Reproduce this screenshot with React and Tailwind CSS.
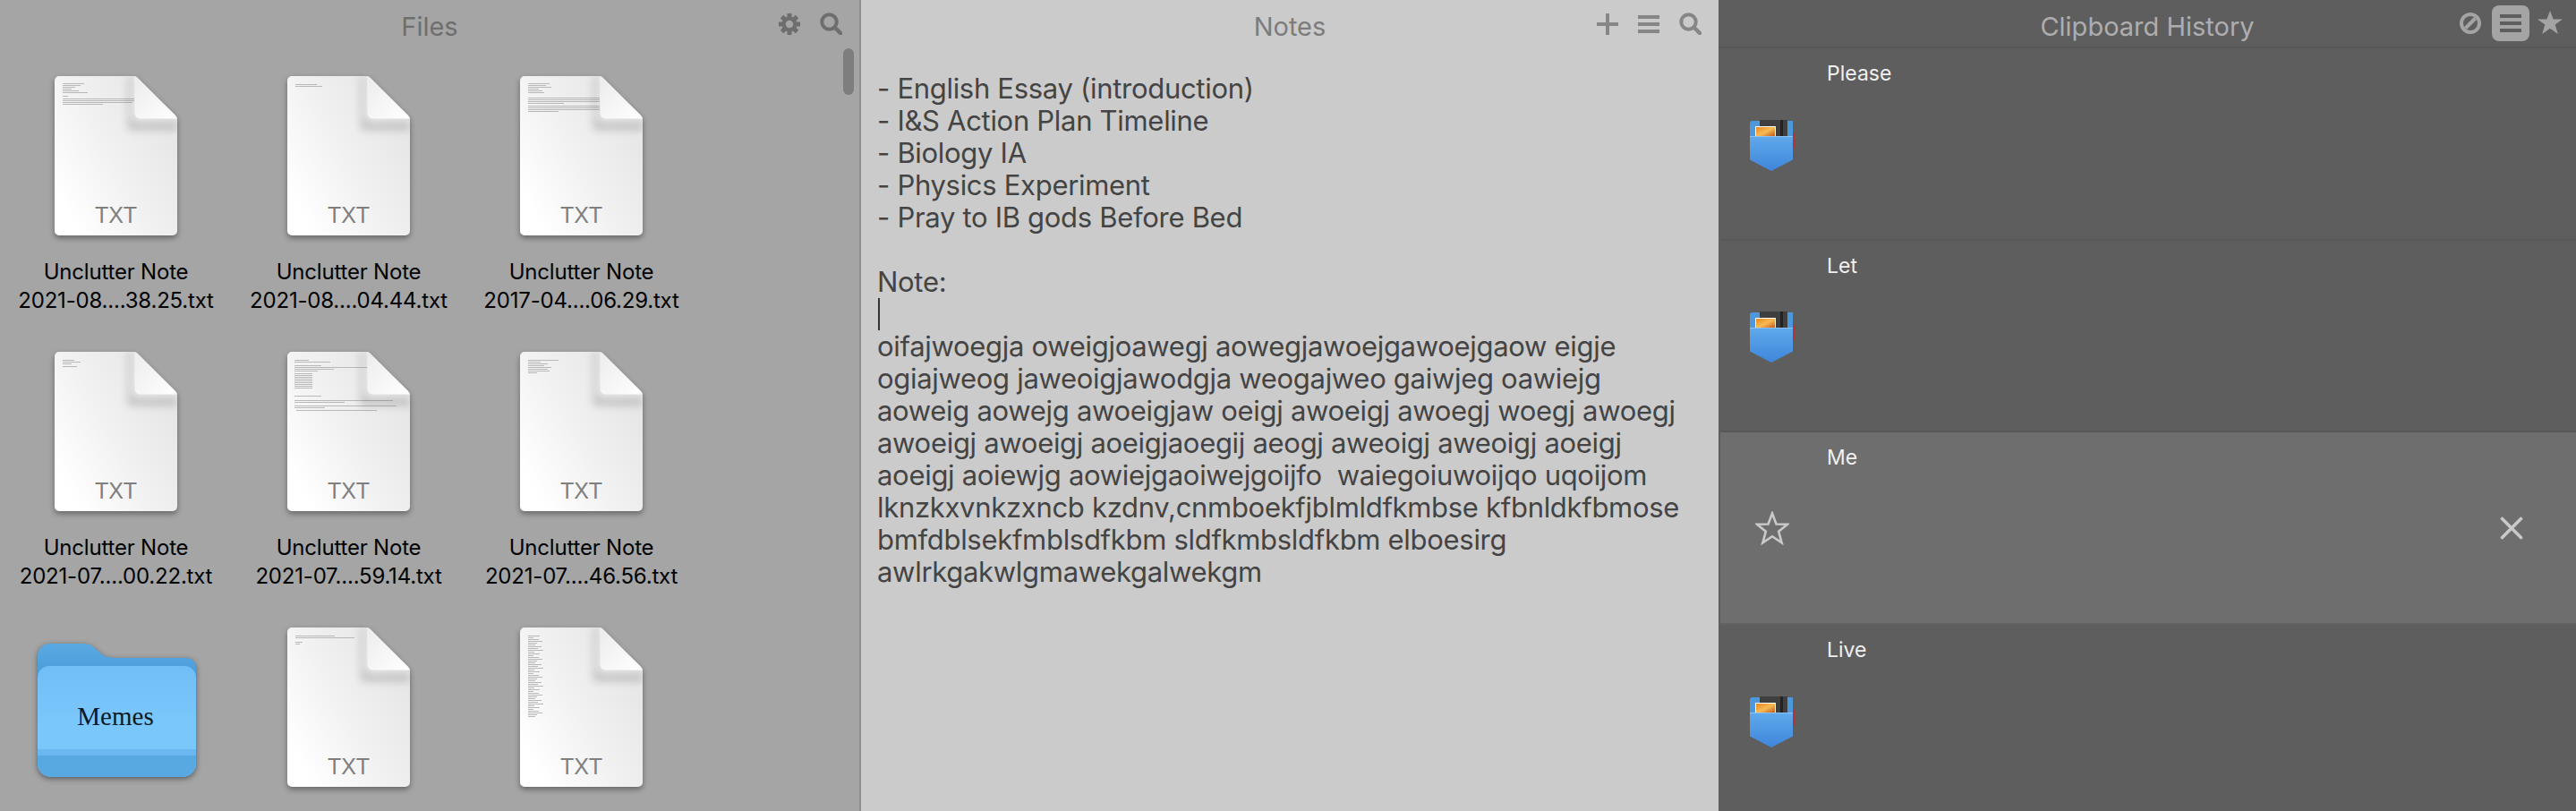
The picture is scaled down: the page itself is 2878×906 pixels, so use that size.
import React, { useId } from "react";

const short = (ys, ws, x = 9) => ys.map((y, i) => [x, y, ws[i % ws.length]]);

const THUMBS = [
  [...short([8, 10, 12, 14, 16, 18], [24, 20, 14, 10, 18, 28]), [9, 22, 6], [9, 25, 80], [9, 27, 80], [9, 29, 78], [9, 31, 45]],
  [[9, 9, 24], [9, 11, 30]],
  [...short([8, 10, 12, 14, 16, 18], [24, 20, 26, 12, 16, 18]), [9, 24, 80], [9, 26, 80], [9, 28, 80], [9, 30, 40], [9, 33, 80], [9, 35, 80], [9, 37, 80], [9, 39, 34]],
  [[9, 9, 13], [9, 11, 20], [9, 13, 10], [9, 16, 16]],
  [[8, 9, 16], [8, 11, 40], [8, 15, 30], [8, 17, 88], [8, 19, 44], [8, 21, 26],
   ...[24, 26, 28, 30, 32, 34, 36, 38, 40].map((y) => [8, y, 20]), [8, 49, 30], [8, 54, 110], [8, 56, 56], [8, 60, 114], [8, 62, 34], [10, 65, 90]],
  [[9, 9, 34], [9, 11, 14], [9, 13, 22], [9, 15, 18], [9, 17, 26], [9, 19, 22], [9, 21, 24], [9, 23, 10]],
  [[9, 9, 44], [9, 11, 66], [9, 16, 8], [9, 18, 5]],
  [...[9,11,13,15,17,19,21,23,25,27,29,31,33,35,37,39,41,43,45,47,49,51,53,55,57,59,61,63,65,67,69,71,73,75,77,79,81,83,85,87,89,91,93,95,97,99].map((y, i) => [9, y, [13, 6, 12, 16, 10, 8, 15, 11, 17, 7][i % 10]])],
];

function DocIcon({ lines }) {
  const id = useId();
  return (
    <svg width="137" height="178" viewBox="0 0 137 178" className="block overflow-visible drop-shadow-[0_3px_3px_rgba(0,0,0,0.38)]">
      <defs>
        <linearGradient id={id + "b"} x1="1" y1="0.18" x2="0.08" y2="0.82">
          <stop offset="0" stopColor="#e4e4e4" />
          <stop offset="0.55" stopColor="#f1f1f1" />
          <stop offset="1" stopColor="#ffffff" />
        </linearGradient>
        <linearGradient id={id + "f"} x1="0" y1="0" x2="1" y2="1">
          <stop offset="0" stopColor="#ececec" />
          <stop offset="1" stopColor="#ffffff" />
        </linearGradient>
        <filter id={id + "s"} x="-40%" y="-40%" width="180%" height="180%">
          <feGaussianBlur stdDeviation="5" />
        </filter>
        <clipPath id={id + "c"}>
          <path d="M5 0H89L137 47V173a5 5 0 0 1-5 5H5a5 5 0 0 1-5-5V5a5 5 0 0 1 5-5Z" />
        </clipPath>
      </defs>
      <path d="M5 0H88Q90 0 92 2L135 44Q137 46 137 50V173a5 5 0 0 1-5 5H5a5 5 0 0 1-5-5V5a5 5 0 0 1 5-5Z" fill={`url(#${id}b)`} />
      {lines.map(([x, y, w], i) => (
        <rect key={i} x={x} y={y} width={w} height="1" fill="#b8b8b8" />
      ))}
      <g clipPath={`url(#${id}c)`}>
        <path d="M86 0V44Q86 52 94 52H137V60H82V0Z" fill="#000" opacity="0.18" filter={`url(#${id}s)`} />
      </g>
      <path d="M89 0Q91 0 93 2L135 44Q136.500 45.500 137 47.500H96Q90 47.500 89.500 41Z" fill={`url(#${id}f)`} />
    </svg>
  );
}

function FolderIcon() {
  const id = useId();
  return (
    <svg width="177" height="150" viewBox="0 0 177 150" className="block drop-shadow-[0_2px_3px_rgba(0,0,0,0.45)]">
      <defs>
        <linearGradient id={id + "t"} x1="0" y1="0" x2="0" y2="1">
          <stop offset="0" stopColor="#5aa9e2" />
          <stop offset="1" stopColor="#3f93d4" />
        </linearGradient>
        <linearGradient id={id + "f"} x1="0" y1="0" x2="0" y2="1">
          <stop offset="0" stopColor="#71bdf5" />
          <stop offset="0.5" stopColor="#7ac7fc" />
          <stop offset="1" stopColor="#7ac7fc" />
        </linearGradient>
      </defs>
      <path d="M0 14a14 14 0 0 1 14-14H50q10 0 15 6l8 7q6 3 12 3H165q12 0 12 12V60H0Z" fill={`url(#${id}t)`} />
      <path d="M0 38a13 13 0 0 1 13-13H164a13 13 0 0 1 13 13V134a15 15 0 0 1-15 15H15a15 15 0 0 1-15-15Z" fill={`url(#${id}f)`} />
      <path d="M0 134V125H177V134a15 15 0 0 1-15 15H15a15 15 0 0 1-15-15Z" fill="#58a8e2" />
      <rect x="0" y="118" width="177" height="7" fill="#6ab8ef" />
    </svg>
  );
}

function Search({ color }) {
  return (
    <svg width="25" height="25" viewBox="0 0 25 25" fill="none" stroke={color} className="block">
      <circle cx="10.500" cy="10.500" r="8.200" strokeWidth="4" />
      <path d="M16.500 16.500L23 23" strokeWidth="4.500" strokeLinecap="round" />
    </svg>
  );
}

function Gear({ color }) {
  return (
    <svg width="24" height="24" viewBox="0 0 24 24" className="block" fill={color}>
      {[0, 45, 90, 135].map((a) => (
        <rect key={a} x="9.500" y="0" width="5" height="24" rx="0.500" transform={`rotate(${a} 12 12)`} />
      ))}
      <circle cx="12" cy="12" r="8.500" />
      <circle cx="12" cy="12" r="4.200" fill="#a5a5a5" />
    </svg>
  );
}

function Plus({ color }) {
  return (
    <svg width="24" height="24" viewBox="0 0 24 24" className="block" fill={color}>
      <rect x="10" y="0" width="4" height="24" />
      <rect x="0" y="10" width="24" height="4" />
    </svg>
  );
}

function Burger({ color }) {
  return (
    <svg width="24" height="20" viewBox="0 0 24 20" className="block" fill={color}>
      <rect y="0" width="24" height="4" />
      <rect y="8" width="24" height="4" />
      <rect y="16" width="24" height="4" />
    </svg>
  );
}

function NoSign({ color }) {
  return (
    <svg width="24" height="24" viewBox="0 0 24 24" fill="none" stroke={color} strokeWidth="4" className="block">
      <circle cx="12" cy="12" r="10" />
      <path d="M6.500 17.500L17.500 6.500" />
    </svg>
  );
}

function StarSolid({ color }) {
  return (
    <svg width="28" height="26" viewBox="0 0 28 26" className="block" fill={color}>
      <path d="M14 0L17.600 9.400H28L19.700 15.600L22.800 26L14 19.700L5.200 26L8.300 15.600L0 9.400H10.400Z" />
    </svg>
  );
}

function StarOutline() {
  return (
    <svg width="38" height="38" viewBox="0 0 38 38" fill="none" stroke="#c9c9c9" strokeWidth="2.600" className="block">
      <path d="M19 2.500L23.500 14.500L36 14.800L26.200 22.800L29.600 35.300L19 28.200L8.400 35.300L11.800 22.800L2 14.800L14.500 14.500Z" />
    </svg>
  );
}

function XIcon() {
  return (
    <svg width="26" height="26" viewBox="0 0 26 26" fill="none" stroke="#c9c9c9" strokeWidth="3.600" strokeLinecap="round" className="block">
      <path d="M2.500 2.500L23.500 23.500M23.500 2.500L2.500 23.500" />
    </svg>
  );
}

function Pocket() {
  const id = useId();
  return (
    <svg width="52" height="57" viewBox="0 0 52 57" className="block">
      <defs>
        <linearGradient id={id + "p"} x1="0" y1="0" x2="0" y2="1">
          <stop offset="0" stopColor="#5fa9ec" />
          <stop offset="1" stopColor="#3f86da" />
        </linearGradient>
        <linearGradient id={id + "o"} x1="0" y1="0" x2="1" y2="1">
          <stop offset="0" stopColor="#e8861f" />
          <stop offset="0.5" stopColor="#f6bb55" />
          <stop offset="1" stopColor="#bd4f16" />
        </linearGradient>
      </defs>
      <path d="M0 4a3 3 0 0 1 3-3H48V22H0Z" fill="#4d97dc" />
      <rect x="11" y="0" width="31" height="22" fill="#3f3f3f" />
      <rect x="34" y="0" width="3" height="22" fill="#222" />
      <rect x="6" y="7" width="23" height="13" fill="#fff" />
      <rect x="7" y="8" width="21" height="11" fill={`url(#${id}o)`} />
      <rect x="48" y="15" width="3" height="17" fill="#b5362f" />
      <path d="M0 18H48V44.500L25 56.500a2 2 0 0 1-2 0L0 44.500Z" fill={`url(#${id}p)`} />
      <rect x="0" y="18" width="48" height="1" fill="#8cc2f4" />
    </svg>
  );
}

function Header({ title, titleColor, icons, className = "" }) {
  return (
    <div className={"grid h-[52px] grid-cols-[1fr_auto_1fr] items-start " + className}>
      <div />
      <div className={"pt-[12px] text-[29px] leading-[36px] " + titleColor}>{title}</div>
      {icons}
    </div>
  );
}

const FILES = [
  ["Unclutter Note", "2021-08....38.25.txt", 0],
  ["Unclutter Note", "2021-08....04.44.txt", 1],
  ["Unclutter Note", "2017-04....06.29.txt", 2],
  ["Unclutter Note", "2021-07....00.22.txt", 3],
  ["Unclutter Note", "2021-07....59.14.txt", 4],
  ["Unclutter Note", "2021-07....46.56.txt", 5],
  null,
  ["", "", 6],
  ["", "", 7],
];

function FileCell({ file }) {
  if (!file) {
    return (
      <div className="flex w-[260px] flex-col items-center pt-[18px]">
        <div className="relative h-[150px] w-[177px]">
          <FolderIcon />
          <div className="absolute inset-x-0 top-[63px] pr-[2px] text-center text-[29px] leading-[36px] text-[#0c1a26] [font-family:'Liberation_Serif',serif]">
            Memes
          </div>
        </div>
      </div>
    );
  }
  const [a, b, t] = file;
  return (
    <div className="flex w-[260px] flex-col items-center pr-px">
      <div className="relative h-[178px] w-[137px]">
        <DocIcon lines={THUMBS[t]} />
        <div className="absolute inset-x-0 top-[141px] text-center text-[25px] leading-[28px] text-[#7f7f7f] [font-family:'Liberation_Sans',sans-serif]">
          TXT
        </div>
      </div>
      {a && (
        <div className="mt-[25px] whitespace-nowrap text-center text-[24px] leading-[32px] tracking-[-0.2px] text-black">
          <div>{a}</div>
          <div>{b}</div>
        </div>
      )}
    </div>
  );
}

const NOTE_LINES = [
  "- English Essay (introduction)",
  "- I&S Action Plan Timeline",
  "- Biology IA",
  "- Physics Experiment",
  "- Pray to IB gods Before Bed",
  "",
  "Note:",
  "|",
  "oifajwoegja oweigjoawegj aowegjawoejgawoejgaow eigje",
  "ogiajweog jaweoigjawodgja weogajweo gaiwjeg oawiejg",
  "aoweig aowejg awoeigjaw oeigj awoeigj awoegj woegj awoegj",
  "awoeigj awoeigj aoeigjaoegij aeogj aweoigj aweoigj aoeigj",
  "aoeigj aoiewjg aowiejgaoiwejgoijfo  waiegoiuwoijqo uqoijom",
  "lknzkxvnkzxncb kzdnv,cnmboekfjblmldfkmbse kfbnldkfbmose",
  "bmfdblsekfmblsdfkbm sldfkmbsldfkbm elboesirg",
  "awlrkgakwlgmawekgalwekgm",
];

function ClipRow({ text, selected }) {
  return (
    <div className={"ml-[2px] flex h-[214.670px] border-b-2 " + (selected ? "border-[#636363] bg-[#6e6e6e]" : "border-[#585858]")}>
      <div className={"flex w-[118px] shrink-0 items-center justify-center " + (selected ? "pr-[2px]" : "pt-[4px]")}>
        {selected ? <StarOutline /> : <Pocket />}
      </div>
      <div className="flex-1 pl-[1px] pt-[12px] text-[23px] leading-[32px] text-[#f0f0f0]">{text}</div>
      {selected && (
        <div className="flex items-center pr-[59px]">
          <XIcon />
        </div>
      )}
    </div>
  );
}

export default function App() {
  return (
    <div className="flex h-[906px] w-[2878px] overflow-hidden [font-family:Inter,sans-serif]">
      <section className="relative h-full w-[960px] shrink-0 bg-[#a5a5a5]">
        <Header
          title="Files"
          titleColor="text-[#6e6e6e]"
          icons={
            <div className="flex items-center justify-end gap-[22px] pr-[19px] pt-[14px]">
              <Gear color="#6e6e6e" />
              <Search color="#6e6e6e" />
            </div>
          }
        />
        <div className="grid grid-cols-[repeat(3,260px)] auto-rows-[308px] pt-[33px]">
          {FILES.map((f, i) => (
            <FileCell key={i} file={f} />
          ))}
        </div>
        <div className="absolute right-[6px] top-[54px] h-[52px] w-[12px] rounded-full bg-[#7e7e7e]" />
      </section>
      <div className="h-full w-[2px] shrink-0 bg-[#8f8f8f]" />
      <section className="h-full w-[958px] shrink-0 bg-[#cbcbcb]">
        <Header
          title="Notes"
          titleColor="text-[#7c7c7c]"
          icons={
            <div className="flex items-center justify-end gap-[22px] pr-[19px] pt-[14px]">
              <Plus color="#868686" />
              <Burger color="#868686" />
              <Search color="#868686" />
            </div>
          }
        />
        <div className="pl-[18px] pt-[29px] text-[31px] leading-[36px] tracking-[-0.3px] text-[#444444]">
          {NOTE_LINES.map((l, i) =>
            l === "|" ? (
              <div key={i} className="h-[36px]">
                <div className="ml-px h-[36px] w-[2px] bg-[#333333]" />
              </div>
            ) : (
              <div key={i} className="h-[36px] whitespace-pre">
                {l}
              </div>
            )
          )}
        </div>
      </section>
      <section className="h-full flex-1 bg-[#5e5e5e]">
        <Header
          title="Clipboard History"
          titleColor="text-[#aeaeae]"
          className="box-content border-b-2 border-[#585858]"
          icons={
            <div className="flex items-start justify-end pr-[15px] pt-[6px]">
              <div className="pt-[8px]">
                <NoSign color="#a4a4a4" />
              </div>
              <div className="ml-[12px] flex h-[40px] w-[42px] items-center justify-center rounded-[8px] bg-[#a4a4a4]">
                <Burger color="#5e5e5e" />
              </div>
              <div className="ml-[9px] pt-[6px]">
                <StarSolid color="#a4a4a4" />
              </div>
            </div>
          }
        />
        <ClipRow text="Please" />
        <ClipRow text="Let" />
        <ClipRow text="Me" selected />
        <ClipRow text="Live" />
      </section>
    </div>
  );
}
